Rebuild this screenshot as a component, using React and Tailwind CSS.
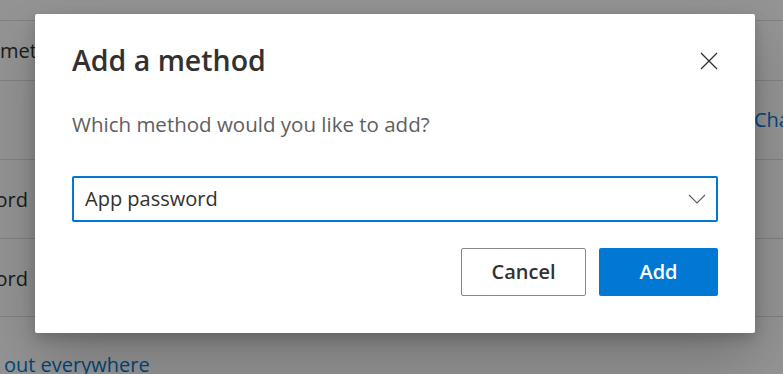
import React from 'react';

const font = { fontFamily: '"Open Sans", "Noto Sans", sans-serif' };

function PageBehind() {
  return (
    <div className="w-[783px] h-[374px] bg-white text-[20px] text-[#323130]" style={font}>
      <div className="pt-[20px]">
        {/* default method row */}
        <div className="h-[60px] flex items-center border-t border-[#e1dfdd] whitespace-nowrap">
          <span>method: Microsoft Authenticator - notification</span>
        </div>
        {/* phone row */}
        <div className="h-[79px] flex items-center border-t border-[#e1dfdd] whitespace-nowrap">
          <div className="w-[754px] shrink-0" />
          <span className="text-[#0078d4]">Change</span>
        </div>
        {/* password row */}
        <div className="h-[79px] flex items-center pt-[2px] border-t border-[#e1dfdd] whitespace-nowrap">
          <div className="w-[28px] flex justify-end overflow-hidden">
            <span>Password</span>
          </div>
        </div>
        {/* app password row */}
        <div className="h-[79px] flex items-center pt-[2px] border-t border-[#e1dfdd] border-b whitespace-nowrap">
          <div className="w-[28px] flex justify-end overflow-hidden">
            <span>App password</span>
          </div>
        </div>
        <div className="pt-[33px] pl-[4px] text-[#0078d4] whitespace-nowrap">out everywhere</div>
      </div>
    </div>
  );
}

function AddMethodDialog() {
  return (
    <div
      className="absolute left-[35px] top-[14px] w-[720px] h-[319px] bg-white rounded-[2px] px-[37px] pt-[28px] shadow-[0_25px_58px_rgba(0,0,0,0.22),0_5px_14px_rgba(0,0,0,0.18)]"
      style={font}
    >
      <div className="flex items-start justify-between">
        <h2 className="text-[28.5px] leading-[36px] font-semibold text-[#323130]">Add a method</h2>
        <button className="mt-[10px]" aria-label="Close">
          <svg width="18" height="18" viewBox="0 0 18 18" fill="none" stroke="#323130" strokeWidth="1.2">
            <line x1="1" y1="1" x2="17" y2="17" />
            <line x1="17" y1="1" x2="1" y2="17" />
          </svg>
        </button>
      </div>

      <p className="mt-[33px] text-[20.5px] leading-[26px] text-[#605e5c]">Which method would you like to add?</p>

      <div className="mt-[39px] h-[46px] border-2 border-[#0078d4] rounded-[2px] flex items-center justify-between pl-[11px] pr-[10px]">
        <span className="text-[20px] text-[#323130]">App password</span>
        <svg width="18" height="10" viewBox="0 0 18 10" fill="none" stroke="#605e5c" strokeWidth="1.1">
          <polyline points="1,1 9,9 17,1" />
        </svg>
      </div>

      <div className="mt-[26px] flex justify-end gap-[13px]">
        <button className="w-[125px] h-[48px] border border-[#8a8886] rounded-[2px] bg-white text-[20px] font-semibold text-[#323130]">
          Cancel
        </button>
        <button className="w-[119px] h-[48px] rounded-[2px] bg-[#0078d4] text-[20px] font-semibold text-white">
          Add
        </button>
      </div>
    </div>
  );
}

export default function App() {
  return (
    <div className="relative w-[783px] h-[374px] overflow-hidden">
      <PageBehind />
      <div className="absolute inset-0 bg-black/[0.42]" />
      <AddMethodDialog />
    </div>
  );
}
